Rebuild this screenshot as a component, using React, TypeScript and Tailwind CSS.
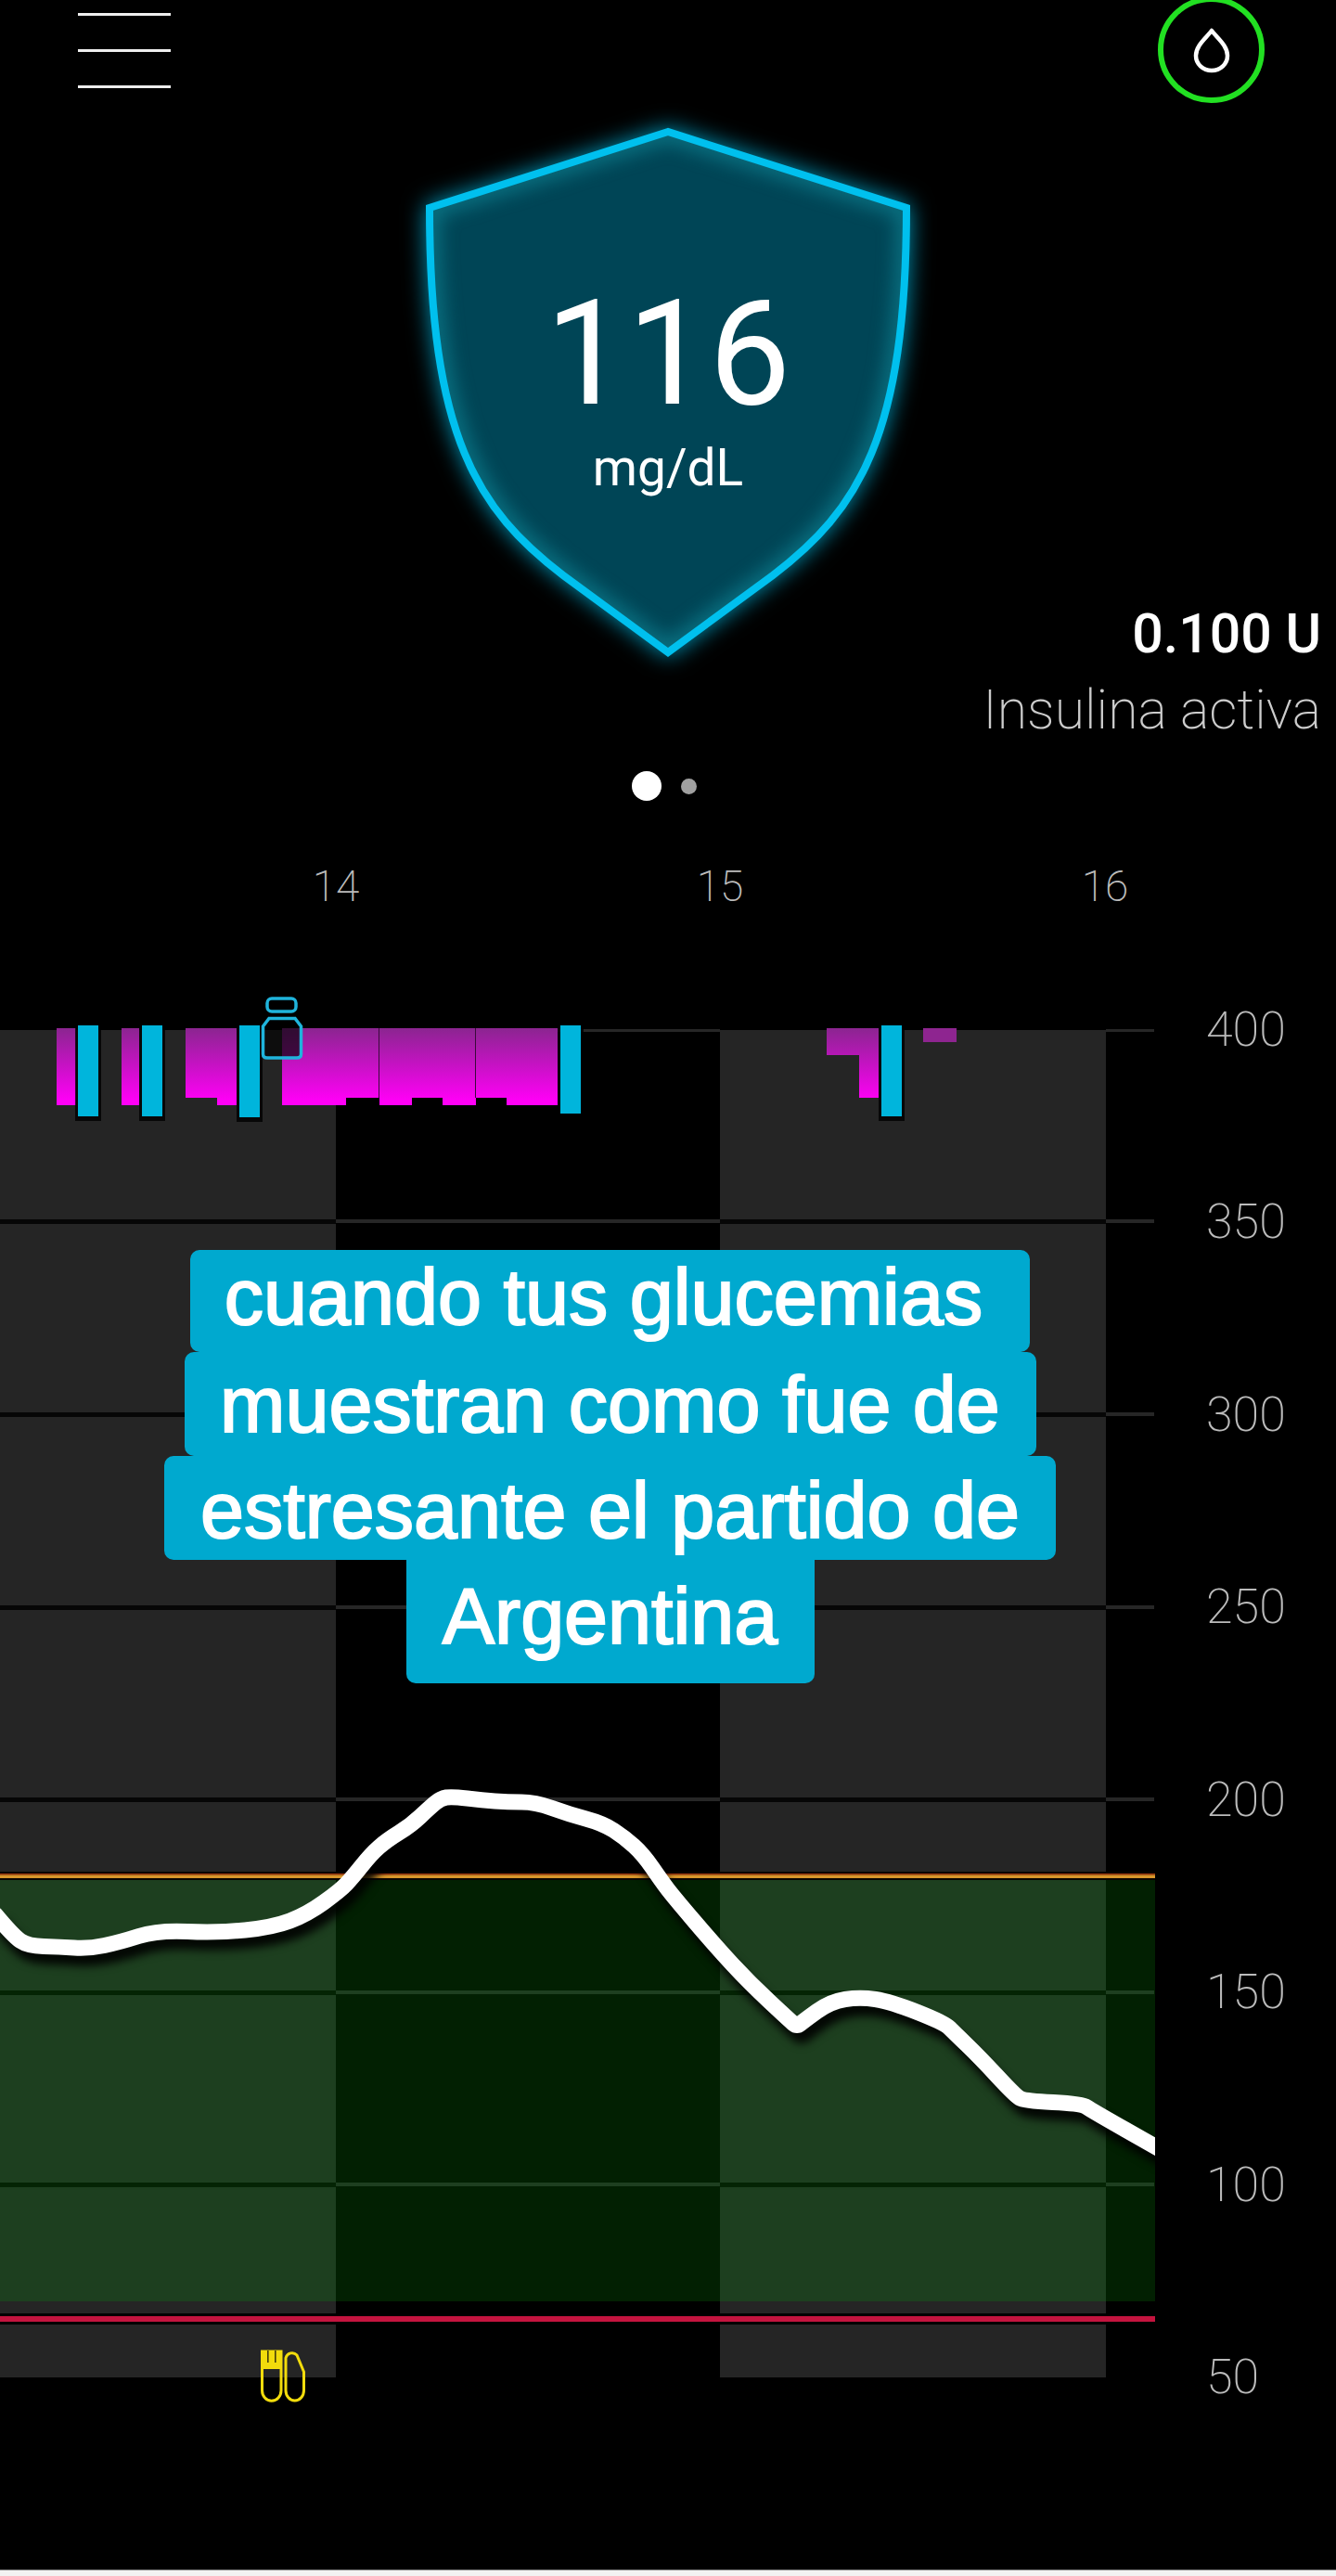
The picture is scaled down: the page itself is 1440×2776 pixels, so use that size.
import React from 'react';

const AXIS_LABELS = [400, 350, 300, 250, 200, 150, 100, 50];
const TICKS = [14, 15, 16];
const STRIPES = [
  { x: 0, w: 362 },
  { x: 776, w: 416 },
];
const GAPS = [
  { x: 362, w: 414 },
  { x: 1192, w: 52 },
];
const GRID_DARK_ZONE = [1316, 1524, 1732, 1939];
const GRID_GREEN_ZONE = [2147, 2354];
const SHIELD =
  'M720 142 L463 224 C463 470 515 550 607 620 L720 703 L833 620 C925 550 977 470 977 224 Z';

// basal segments: x, width, bottom y
const BASAL = [
  [61, 21, 1191],
  [131, 19, 1191],
  [200, 34, 1183],
  [234, 21, 1191],
  [304, 69, 1191],
  [373, 36, 1183],
  [409, 35, 1191],
  [444, 33, 1183],
  [477, 36, 1191],
  [513, 33, 1183],
  [546, 55, 1191],
  [891, 35, 1137],
  [926, 21, 1183],
];

// bolus bars: x, width, bottom y
const BOLUS = [
  [84, 22, 1203],
  [153, 22, 1203],
  [258, 22, 1204],
  [604, 22, 1200],
  [950, 22, 1203],
];

const CURVE: [number, number][] = [
  [-6, 2062], [14, 2086], [30, 2097], [64, 2098], [96, 2100], [129, 2093], [170, 2080], [234, 2083],
  [294, 2077], [331, 2063], [367, 2037], [380, 2023], [400, 1998], [417, 1983], [443, 1967], [463, 1948],
  [475, 1938], [487, 1936], [520, 1940], [547, 1942], [577, 1942], [613, 1955], [650, 1965], [673, 1980],
  [693, 1998], [713, 2027], [725, 2043], [771, 2097], [808, 2137], [852, 2178], [859, 2184], [866, 2178], [895, 2157],
  [927, 2152], [960, 2157], [1018, 2180], [1028, 2190], [1056, 2217], [1094, 2258], [1104, 2264], [1166, 2267], [1176, 2274], [1250, 2316],
];

const curvePath = () => {
  let d = `M${CURVE[0][0]} ${CURVE[0][1]}`;
  for (let i = 1; i < CURVE.length - 1; i++) {
    const [x, y] = CURVE[i];
    const [nx, ny] = CURVE[i + 1];
    d += ` Q${x} ${y} ${(x + nx) / 2} ${(y + ny) / 2}`;
  }
  const last = CURVE[CURVE.length - 1];
  return `${d} L${last[0]} ${last[1]}`;
};

const Chart = () => (
  <svg width="1245" height="1540" viewBox="0 1060 1245 1540" className="block shrink-0">
    <defs>
      <linearGradient id="basal" gradientUnits="userSpaceOnUse" x1="0" y1="1108" x2="0" y2="1186">
        <stop offset="0" stopColor="#8b2590" />
        <stop offset="1" stopColor="#ff00f6" />
      </linearGradient>
    </defs>

    {STRIPES.map((s) => (
      <rect key={s.x} x={s.x} y="1110" width={s.w} height="1452" fill="#252525" />
    ))}

    {/* target range */}
    <rect x="0" y="2026" width="1245" height="454" fill="#022002" />
    {STRIPES.map((s) => (
      <rect key={s.x} x={s.x} y="2026" width={s.w} height="454" fill="#1d3f1f" />
    ))}

    {/* grid */}
    {GAPS.map((g) => (
      <rect key={g.x} x={g.x} y="1109" width={g.w} height="3" fill="#262626" />
    ))}
    {GRID_DARK_ZONE.map((y) => (
      <React.Fragment key={y}>
        {STRIPES.map((s) => (
          <rect key={s.x} x={s.x} y={y - 2} width={s.w} height="5" fill="#060606" />
        ))}
        {GAPS.map((g) => (
          <rect key={g.x} x={g.x} y={y - 2} width={g.w} height="4" fill="#262626" />
        ))}
      </React.Fragment>
    ))}
    {GRID_GREEN_ZONE.map((y) => (
      <React.Fragment key={y}>
        {STRIPES.map((s) => (
          <rect key={s.x} x={s.x} y={y - 2} width={s.w} height="5" fill="#042404" />
        ))}
        {GAPS.map((g) => (
          <rect key={g.x} x={g.x} y={y - 2} width={g.w} height="4" fill="#1e3f20" />
        ))}
      </React.Fragment>
    ))}

    {/* limits */}
    <rect x="0" y="2017" width="1245" height="9" fill="#0a0500" />
    <rect x="0" y="2019" width="1245" height="1.5" fill="#a83a10" />
    <rect x="0" y="2020.5" width="1245" height="3.5" fill="#d9962b" />
    <rect x="0" y="2493" width="1245" height="12" fill="#000000" />
    <rect x="0" y="2496" width="1245" height="6" fill="#c4143f" />

    {/* insulin */}
    {BASAL.map(([x, w, bottom]) => (
      <rect key={x} x={x} y="1108" width={w} height={bottom - 1108} fill="url(#basal)" />
    ))}
    <rect x="995" y="1108" width="36" height="15" fill="#8e2590" />
    <rect x="408" y="1108" width="1" height="75" fill="#3a0a3c" />
    <rect x="512" y="1108" width="1" height="75" fill="#3a0a3c" />
    {BOLUS.map(([x, w, bottom]) => (
      <React.Fragment key={x}>
        <rect x={x - 3} y="1103" width={w + 6} height={bottom - 1098} fill="#000000" opacity="0.8" />
        <rect x={x} y="1105" width={w} height={bottom - 1105} fill="#00b5dc" />
      </React.Fragment>
    ))}

    {/* vial */}
    <g fill="none" stroke="#1fb4dc" strokeWidth="3.5">
      <rect x="288" y="1076" width="31" height="14" rx="5" />
      <path
        d="M290 1097.5 H318 L324.5 1106 V1136 Q324.5 1140 320 1140 H288 Q283.5 1140 283.5 1136 V1106 Z"
        fill="#000000"
        fillOpacity="0.65"
      />
    </g>

    {/* carbs and sensor marker */}
    <g fill="none" stroke="#f2dc0c" strokeWidth="3">
      <path d="M282.5 2534 H303 V2576 A10 11 0 0 1 282.5 2576 Z" />
      <path d="M308 2576 V2541 A7 7 0 0 1 320 2538 L327.5 2556 V2576 A9.7 11 0 0 1 308 2576 Z" />
    </g>
    <rect x="282" y="2533" width="22" height="20" fill="#f2dc0c" />
    <rect x="288" y="2533" width="1.6" height="13" fill="#443f0a" />
    <rect x="296" y="2533" width="1.6" height="13" fill="#443f0a" />

    <g className="drop-shadow-[5px_11px_5px_rgba(0,0,0,0.9)]">
      <path d={curvePath()} fill="none" stroke="#ffffff" strokeWidth="17" strokeLinejoin="round" />
    </g>
  </svg>
);

const App = () => {
  return (
    <div className="w-[1440px] h-[2776px] bg-black overflow-hidden flex flex-col font-['Roboto',sans-serif] text-white">
      {/* top bar */}
      <div className="h-[120px] flex justify-between items-start pl-[84px] pr-[77px]">
        <div className="pt-[14px] flex flex-col gap-[36px]">
          <div className="w-[100px] h-[3px] bg-[#eeeeee]" />
          <div className="w-[100px] h-[3px] bg-[#eeeeee]" />
          <div className="w-[100px] h-[3px] bg-[#eeeeee]" />
        </div>
        <div className="-mt-[4px] w-[115px] h-[115px] rounded-full border-[6px] border-[#22e022] flex items-center justify-center">
          <svg width="42" height="50" viewBox="0 0 42 50">
            <path
              d="M21 4 C27 12 38 20 38 31 A17 16 0 0 1 4 31 C4 20 15 12 21 4 Z"
              fill="none"
              stroke="#ffffff"
              strokeWidth="4.5"
              strokeLinejoin="round"
            />
          </svg>
        </div>
      </div>

      {/* shield and active insulin */}
      <div className="h-[680px] grid grid-cols-[440px_560px_440px]">
        <div />
        <div className="relative h-[600px] flex justify-center">
          <svg
            width="560"
            height="600"
            viewBox="440 120 560 600"
            className="block drop-shadow-[0_0_12px_rgba(0,200,245,0.75)]"
          >
            <defs>
              <clipPath id="shield-inner">
                <path d={SHIELD} />
              </clipPath>
            </defs>
            <path d={SHIELD} fill="#004556" />
            <g clipPath="url(#shield-inner)">
              <path d={SHIELD} fill="none" stroke="#0e8595" strokeWidth="22" opacity="0.7" className="blur-[10px]" />
            </g>
            <path d={SHIELD} fill="none" stroke="#00c0ee" strokeWidth="8" strokeLinejoin="miter" />
          </svg>
          <div className="absolute inset-x-0 top-[168px] flex flex-col items-center">
            <span className="text-[157px] leading-[186px] font-normal">116</span>
            <span className="text-[55px] leading-[60px] mt-[0px]">mg/dL</span>
          </div>
        </div>
        <div className="flex flex-col items-end justify-end pr-[16px]">
          <span className="text-[59px] leading-[66px] font-medium whitespace-nowrap">0.100 U</span>
          <span className="text-[59px] leading-[70px] mt-[14px] font-extralight text-[#cccccc] whitespace-nowrap">
            Insulina activa
          </span>
        </div>
      </div>

      {/* pager */}
      <div className="mt-[31px] h-[32px] pl-[681px] flex items-center gap-[21px]">
        <div className="w-[32px] h-[32px] rounded-full bg-white" />
        <div className="w-[17px] h-[17px] rounded-full bg-[#a0a0a0]" />
      </div>

      {/* hours */}
      <div className="mt-[62px] h-[60px] pl-[155px] grid grid-cols-[414px_414px_416px] items-center text-[46px] leading-[60px] font-extralight text-[#bbbbbb] text-center">
        {TICKS.map((t) => (
          <span key={t}>{t}</span>
        ))}
      </div>

      {/* chart */}
      <div className="relative mt-[75px] flex">
        <Chart />
        <div className="-mt-[54px] pl-[55px] flex flex-col text-[52px] font-extralight text-[#bbbbbb]">
          {AXIS_LABELS.map((l) => (
            <span key={l} className="h-[207.5px] flex items-center">
              {l}
            </span>
          ))}
        </div>

        {/* caption sticker */}
        <div className="absolute left-[177px] top-[287px] w-[961px] flex flex-col items-center font-['Liberation_Sans',sans-serif] text-[84.5px] leading-[100px] [-webkit-text-stroke:2px_white] whitespace-nowrap text-center">
          <div className="w-[905px] h-[110px] pt-[1px] pr-[14px] rounded-[10px] bg-[#00a9cf]">cuando tus glucemias</div>
          <div className="w-[918px] h-[112px] pt-[7px] rounded-[10px] bg-[#00a9cf]">muestran como fue de</div>
          <div className="w-[961px] h-[112px] pt-[9px] rounded-[10px] bg-[#00a9cf]">estresante el partido de</div>
          <div className="w-[440px] h-[133px] pt-[11px] rounded-b-[10px] bg-[#00a9cf]">Argentina</div>
        </div>
      </div>

      <div className="mt-auto h-[7px] border-t border-[#888888] bg-[#f2f2f2]" />
    </div>
  );
};

export default App;
